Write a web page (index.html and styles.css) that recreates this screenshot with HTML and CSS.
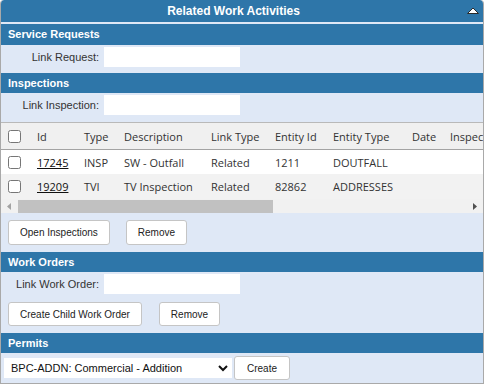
FILE: index.html
```html
<!DOCTYPE html>
<html lang="en">
<head>
  <meta charset="UTF-8" />
  <title>Related Work Activities</title>
  <link rel="stylesheet" href="styles.css">
</head>
<body>
  <div class="panel">
    <div class="panel-header">
      <span class="panel-title">Related Work Activities</span>
      <span class="collapse-icon">
        <svg width="12" height="8" viewBox="0 0 12 8"><polygon points="0.5,6.5 6,1 11.5,6.5" fill="#fff" stroke="#2b2b2b" stroke-width="1"/></svg>
      </span>
    </div>

    <div class="section-bar first">Service Requests</div>
    <div class="field-row sr">
      <label>Link Request:</label>
      <input type="text">
    </div>

    <div class="section-bar">Inspections</div>
    <div class="field-row insp">
      <label>Link Inspection:</label>
      <input type="text">
    </div>

    <div class="grid-wrap">
      <table class="grid">
        <colgroup>
          <col style="width: 29px">
          <col style="width: 47px">
          <col style="width: 40px">
          <col style="width: 87px">
          <col style="width: 64px">
          <col style="width: 58px">
          <col style="width: 79px">
          <col style="width: 38px">
          <col>
        </colgroup>
        <thead>
          <tr>
            <th><input type="checkbox"></th>
            <th>Id</th>
            <th>Type</th>
            <th>Description</th>
            <th>Link Type</th>
            <th>Entity Id</th>
            <th>Entity Type</th>
            <th>Date</th>
            <th>Inspector</th>
          </tr>
        </thead>
        <tbody>
          <tr>
            <td><input type="checkbox"></td>
            <td><a href="#">17245</a></td>
            <td>INSP</td>
            <td>SW - Outfall</td>
            <td>Related</td>
            <td>1211</td>
            <td>DOUTFALL</td>
            <td></td>
            <td></td>
          </tr>
          <tr class="alt">
            <td><input type="checkbox"></td>
            <td><a href="#">19209</a></td>
            <td>TVI</td>
            <td>TV Inspection</td>
            <td>Related</td>
            <td>82862</td>
            <td>ADDRESSES</td>
            <td></td>
            <td></td>
          </tr>
        </tbody>
      </table>
    </div>
    <div class="scrollbar">
      <span class="scroll-btn">
        <svg width="4" height="7" viewBox="0 0 4 7"><polygon points="4,0 0,3.5 4,7" fill="#a3a3a3"/></svg>
      </span>
      <span class="scroll-track"><span class="scroll-thumb"></span></span>
      <span class="scroll-btn">
        <svg width="4" height="7" viewBox="0 0 4 7"><polygon points="0,0 4,3.5 0,7" fill="#505050"/></svg>
      </span>
    </div>

    <div class="button-row insp-buttons">
      <button>Open Inspections</button>
      <button>Remove</button>
    </div>

    <div class="section-bar">Work Orders</div>
    <div class="field-row wo">
      <label>Link Work Order:</label>
      <input type="text">
    </div>
    <div class="button-row wo-buttons">
      <button>Create Child Work Order</button>
      <button>Remove</button>
    </div>

    <div class="section-bar">Permits</div>
    <div class="permit-row">
      <select>
        <option>BPC-ADDN: Commercial - Addition</option>
        <option>BPC-ALT: Commercial - Alteration</option>
        <option>BPR-NEW: Residential - New</option>
      </select>
      <button>Create</button>
    </div>
  </div>
</body>
</html>
```

FILE: styles.css
```css
body {
  margin: 0;
  background-color: #fff;
  font-family: 'Liberation Sans', Arial, sans-serif;
}

.panel {
  width: 484px;
  height: 384px;
  box-sizing: border-box;
  border: 1px solid #a9a9a9;
  border-top: none;
  border-radius: 4px 4px 0 0;
  background-color: #dfe8f6;
  overflow: hidden;
}

.panel-header {
  display: flex;
  align-items: center;
  height: 22px;
  background-color: #2e76a9;
  border-radius: 3px 3px 0 0;
  color: white;
}

.panel-title {
  flex: 1;
  text-align: center;
  font-size: 12px;
  font-weight: bold;
}

.collapse-icon {
  width: 17px;
  display: flex;
  align-items: center;
}

.collapse-icon svg {
  display: block;
  margin: 0 0 1px 1px;
}

.section-bar {
  height: 20px;
  line-height: 20px;
  background-color: #2e76a9;
  color: white;
  font-size: 11px;
  font-weight: bold;
  padding-left: 7px;
}

.section-bar.first {
  margin-top: 2px;
  height: 21px;
  line-height: 21px;
}

.field-row {
  display: flex;
  align-items: center;
  gap: 5px;
}

.field-row.sr {
  padding: 2px 0 6px;
}

.field-row.insp {
  padding: 2px 0 7px;
}

.field-row.wo {
  padding: 2px 0 2px;
}

.field-row label {
  width: 98px;
  text-align: right;
  font-size: 11px;
  color: #333;
}

.field-row input {
  width: 136px;
  height: 20px;
  box-sizing: border-box;
  border: 1px solid #fff;
  background-color: #fff;
  padding: 0 3px;
  margin: 0;
}

.grid-wrap {
  border-top: 1px solid #b9b9b9;
  overflow: hidden;
  background-color: #f2f2f2;
}

.grid {
  width: 852px;
  table-layout: fixed;
  border-collapse: collapse;
  font-family: 'Open Sans', sans-serif;
  font-size: 11px;
  color: #333;
}

.grid th {
  height: 26px;
  background-color: #f0f0f0;
  border-bottom: 1px solid #a3a3a3;
  font-weight: normal;
  text-align: left;
  padding: 0 0 0 7px;
  white-space: nowrap;
  overflow: hidden;
}

.grid td {
  height: 24px;
  padding: 0 0 0 7px;
  background-color: #fff;
  white-space: nowrap;
}

.grid tr.alt td {
  height: 25px;
  background-color: #f2f2f2;
}

.grid input[type="checkbox"] {
  margin: 0;
  display: block;
  width: 13px;
  height: 13px;
}

.grid a {
  color: #111;
  text-decoration: underline;
}

.scrollbar {
  display: flex;
  height: 14px;
  background-color: #f1f1f1;
}

.scroll-btn {
  width: 16px;
  display: flex;
  align-items: center;
  justify-content: center;
}

.scroll-track {
  flex: 1;
  display: flex;
  align-items: center;
  padding-left: 1px;
}

.scroll-thumb {
  width: 255px;
  height: 13px;
  background-color: #c1c1c1;
}

.button-row {
  display: flex;
  gap: 16px;
  padding-left: 7px;
}

.insp-buttons {
  padding-top: 7px;
  padding-bottom: 7px;
}

.wo-buttons {
  padding-top: 6px;
  padding-bottom: 7px;
  gap: 17px;
}

button {
  height: 24px;
  padding: 0 11px;
  font-family: 'Liberation Sans', Arial, sans-serif;
  font-size: 10px;
  color: #222;
  background-color: #fff;
  border: 1px solid #c5c5c5;
  border-radius: 3px;
  cursor: pointer;
}

.insp-buttons button {
  height: 25px;
}

.permit-row {
  display: flex;
  align-items: center;
  gap: 2px;
  padding: 3px 0 0 3px;
}

.permit-row select {
  width: 228px;
  height: 20px;
  font-family: 'Liberation Sans', Arial, sans-serif;
  font-size: 11px;
  color: #111;
  background-color: #fff;
  border: 1px solid #fff;
  border-radius: 0;
  padding: 0 2px;
}

.permit-row button {
  padding: 0 12px;
}
```
